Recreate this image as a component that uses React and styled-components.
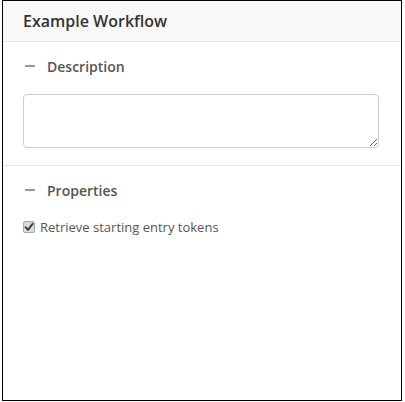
import React from "react";
import styled, { createGlobalStyle } from "styled-components";

const GlobalStyle = createGlobalStyle`
  html, body {
    margin: 0;
    padding: 0;
    background: #fff;
  }
  body {
    font-family: "Open Sans", "Liberation Sans", sans-serif;
  }
`;

const Frame = styled.div`
  margin-left: 2px;
  width: 398px;
  height: 399px;
  border: 1px solid #000;
  background: #fff;
  display: flex;
  flex-direction: column;
`;

const Header = styled.div`
  height: 40px;
  background: #f8f8f8;
  border-bottom: 1px solid #e5e5e5;
  display: flex;
  align-items: center;
  padding: 0 20px;

  h1 {
    margin: 0;
    font-size: 16px;
    font-weight: 600;
    color: #333;
  }
`;

const Section = styled.div`
  padding: ${(p) => p.$top}px 20px ${(p) => p.$bottom}px;
  border-bottom: ${(p) => (p.$divider ? "1px solid #e5e5e5" : "none")};
`;

const SectionTitle = styled.div`
  display: flex;
  align-items: center;
  height: 20px;
  padding-left: 2px;
  font-size: 14px;
  font-weight: 600;
  color: #555;

  &::before {
    content: "";
    width: 10px;
    height: 2px;
    background: #999;
    margin-right: 12px;
  }
`;

const TextArea = styled.textarea`
  display: block;
  box-sizing: border-box;
  margin-top: 18px;
  width: 356px;
  height: 54px;
  border: 1px solid #ccc;
  border-radius: 4px;
  padding: 6px 10px;
  font-family: inherit;
  font-size: 13px;
  outline: none;
`;

const CheckRow = styled.label`
  display: flex;
  align-items: center;
  margin-top: 18px;
  height: 18px;
  font-size: 13px;
  color: #555;
`;

const CheckBox = styled.span`
  box-sizing: border-box;
  width: 12px;
  height: 12px;
  margin-right: 5px;
  border: 1px solid #a8a8a8;
  border-radius: 2px;
  background: #dcdcdc;
  display: flex;
  align-items: center;
  justify-content: center;

  svg {
    width: 10px;
    height: 10px;
  }
`;

export default function App() {
  return (
    <>
      <GlobalStyle />
      <Frame>
        <Header>
          <h1>Example Workflow</h1>
        </Header>
        <Section $top={14} $bottom={17} $divider>
          <SectionTitle>Description</SectionTitle>
          <TextArea />
        </Section>
        <Section $top={14} $bottom={16}>
          <SectionTitle>Properties</SectionTitle>
          <CheckRow>
            <CheckBox>
              <svg viewBox="0 0 10 10">
                <path
                  d="M1.5 5.2 L4 7.8 L8.6 1.8"
                  fill="none"
                  stroke="#3a3a3a"
                  strokeWidth="1.9"
                  strokeLinecap="round"
                  strokeLinejoin="round"
                />
              </svg>
            </CheckBox>
            Retrieve starting entry tokens
          </CheckRow>
        </Section>
      </Frame>
    </>
  );
}
